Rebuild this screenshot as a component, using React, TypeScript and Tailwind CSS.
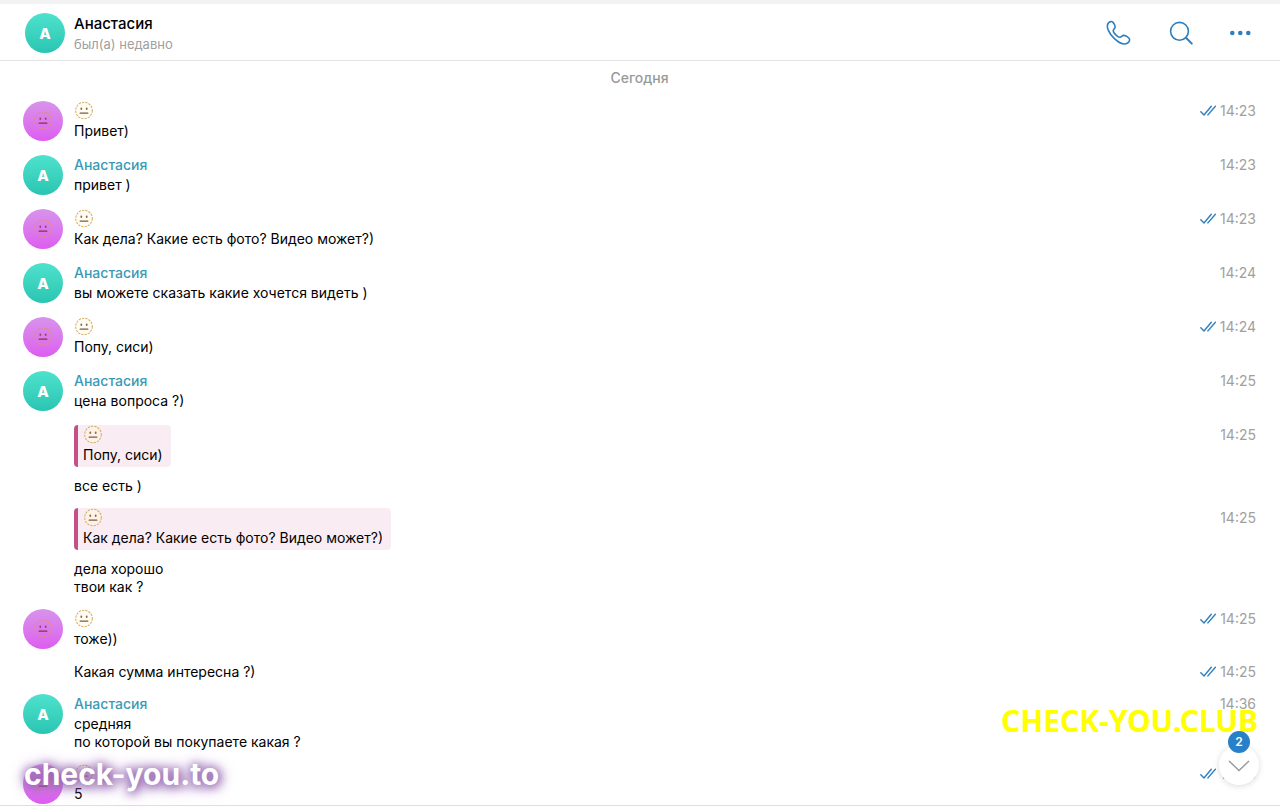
import { Fragment } from "react";

type Message = {
  id: number;
  from?: "me" | "her";
  quote?: string;
  lines: string[];
  time: string;
  read?: boolean;
};

const messages: Message[] = [
  { id: 1, from: "me", lines: ["Привет)"], time: "14:23", read: true },
  { id: 2, from: "her", lines: ["привет )"], time: "14:23" },
  { id: 3, from: "me", lines: ["Как дела? Какие есть фото? Видео может?)"], time: "14:23", read: true },
  { id: 4, from: "her", lines: ["вы можете сказать какие хочется видеть )"], time: "14:24" },
  { id: 5, from: "me", lines: ["Попу, сиси)"], time: "14:24", read: true },
  { id: 6, from: "her", lines: ["цена вопроса ?)"], time: "14:25" },
  { id: 7, quote: "Попу, сиси)", lines: ["все есть )"], time: "14:25" },
  { id: 8, quote: "Как дела? Какие есть фото? Видео может?)", lines: ["дела хорошо", "твои как ?"], time: "14:25" },
  { id: 9, from: "me", lines: ["тоже))"], time: "14:25", read: true },
  { id: 10, lines: ["Какая сумма интересна ?)"], time: "14:25", read: true },
  { id: 11, from: "her", lines: ["средняя", "по которой вы покупаете какая ?"], time: "14:36" },
  { id: 12, from: "me", lines: ["5"], time: "14:36", read: true },
];

function DottedFace({ tone }: { tone: "light" | "avatar" | "quote" }) {
  const light = tone !== "avatar";
  return (
    <svg className="size-5 shrink-0" viewBox="0 0 20 20" fill="none" aria-hidden="true">
      <circle
        cx="10"
        cy="9.5"
        r="8.3"
        fill={tone === "light" ? "#fffdf3" : tone === "quote" ? "#fdf1e8" : "none"}
        stroke={light ? "#d6b06a" : "#e08c80"}
        strokeWidth="1.1"
        strokeDasharray="2.3 1.05"
      />
      <ellipse cx="7.3" cy="7.8" rx="0.9" ry="1.3" fill={light ? "#8a6a4d" : "#9c4560"} />
      <ellipse cx="12.7" cy="7.8" rx="0.9" ry="1.3" fill={light ? "#8a6a4d" : "#9c4560"} />
      <path d="M6.2 12.2h7.6" stroke={light ? "#7b5b40" : "#8f2f48"} strokeWidth="1.3" strokeLinecap="round" />
    </svg>
  );
}

function Avatar({ who }: { who: "me" | "her" }) {
  return who === "her" ? (
    <div className="flex size-10 shrink-0 items-center justify-center rounded-full bg-linear-to-b from-[#4de2cd] to-[#29c5b2] pt-0.5 text-[15px] font-extrabold text-white">
      А
    </div>
  ) : (
    <div className="flex size-10 shrink-0 items-center justify-center rounded-full bg-linear-to-b from-[#d793ea] to-[#dd5cf0]">
      <DottedFace tone="avatar" />
    </div>
  );
}

function Checks() {
  return (
    <svg className="h-3 w-4" viewBox="0 0 16 12" fill="none" stroke="#2f7fbf" strokeWidth="1.4" strokeLinecap="round" strokeLinejoin="round" aria-label="Прочитано">
      <path d="M0.8 6.8 4 10 11.3 1.2" />
      <path d="M7.9 9.9 15.4 1.2" />
    </svg>
  );
}

function MessageRow({ message }: { message: Message }) {
  const { from, quote, lines, time, read } = message;
  return (
    <li className="flex shrink-0 pb-[13px]">
      <div className={from ? "h-[41px] w-[51px] shrink-0" : "w-[51px] shrink-0"}>{from && <Avatar who={from} />}</div>
      <div className="min-w-0 flex-1">
        {from === "me" && (
          <div className="h-[21px]">
            <DottedFace tone="light" />
          </div>
        )}
        {from === "her" && <div className="h-[21px] leading-5 font-medium text-[#3a9ab5]">Анастасия</div>}
        {quote && (
          <blockquote className="mb-2.5 h-[42px] w-fit max-w-full rounded-sm border-l-4 border-[#c4508a] bg-[#faecf3] pr-2 pl-[5px]">
            <DottedFace tone="quote" />
            <p className="leading-5">{quote}</p>
          </blockquote>
        )}
        <p>
          {lines.map((line, i) => (
            <Fragment key={line}>
              {i > 0 && <br />}
              {line}
            </Fragment>
          ))}
        </p>
      </div>
      <div className={from || quote ? "flex h-5 items-center gap-1 text-[#a0a0a0]" : "flex h-[18px] items-center gap-1 text-[#a0a0a0]"}>
        {read && <Checks />}
        <time>{time}</time>
      </div>
    </li>
  );
}

export default function App() {
  return (
    <div className="relative flex h-screen flex-col overflow-hidden bg-white font-['Inter','Liberation_Sans',sans-serif] text-sm leading-[18px] text-black">
      <header className="flex shrink-0 items-center border-t-4 border-b border-t-[#f2f2f2] border-b-[#e4e4e4] pt-2 pr-7 pb-1.5 pl-[25px]">
        <Avatar who="her" />
        <div className="ml-[9px] flex-1 pt-0.5">
          <h1 className="text-[15px] leading-5 font-medium">Анастасия</h1>
          <p className="text-[13px] leading-5 text-[#a0a0a0]">был(а) недавно</p>
        </div>
        <div className="flex items-center text-[#2f7fbf]">
          <button type="button" aria-label="Позвонить">
            <svg className="size-7" viewBox="0 0 28 28" fill="none" stroke="currentColor" strokeWidth="1.6" strokeLinejoin="round">
              <path d="M4.2 4.2C5.4 2.5 7.6 1.9 9 3.4C10.5 5 11.2 6.6 11.1 8.1C11 9.6 9.2 10.3 9.2 11.9C9.3 13.9 13.8 18.2 15.8 18.3C17.4 18.4 18.1 16.5 19.7 16.4C21.3 16.3 23.4 17.6 24.8 19C26.2 20.4 25.5 22.8 23.7 24C20.5 26.1 15.2 24.1 10.2 19.3C4.6 14 1.9 7.8 4.2 4.2Z" />
            </svg>
          </button>
          <button type="button" aria-label="Поиск" className="mr-8 ml-9">
            <svg className="size-7" viewBox="0 0 28 28" fill="none" stroke="currentColor" strokeWidth="1.6" strokeLinecap="round">
              <circle cx="11.5" cy="12.3" r="8.9" />
              <path d="m18 18.8 5.8 5.8" strokeWidth="2" />
            </svg>
          </button>
          <button type="button" aria-label="Ещё">
            <svg className="h-7 w-6" viewBox="0 0 24 28" fill="currentColor">
              <circle cx="4.3" cy="14" r="2.3" />
              <circle cx="12.3" cy="14" r="2.3" />
              <circle cx="20.3" cy="14" r="2.3" />
            </svg>
          </button>
        </div>
      </header>

      <main className="relative min-h-0 flex-1 overflow-hidden pr-6 pl-[23px]">
        <h2 className="h-10 pt-2 text-center font-medium text-[#999999]">Сегодня</h2>
        <ol className="flex flex-col">
          {messages.map((message) => (
            <MessageRow key={message.id} message={message} />
          ))}
        </ol>
      </main>
      <footer className="h-[7px] shrink-0 border-t border-[#dedede]" />

      <button
        type="button"
        aria-label="Вниз, новых сообщений: 2"
        className="absolute right-[21px] bottom-[27px] flex size-10 items-center justify-center rounded-full bg-white shadow-[0_1px_6px_rgba(0,0,0,0.15)]"
      >
        <svg className="mt-0.5 h-3 w-6" viewBox="0 0 24 12" fill="none" stroke="#999999" strokeWidth="1.4">
          <path d="m2 1 10 9.5L22 1" />
        </svg>
      </button>
      <p className="absolute right-[22px] bottom-[71px] font-['Noto_Sans','Open_Sans',sans-serif] text-[30px] leading-10 font-bold text-[#ffff00]">
        CHECK-YOU.CLUB
      </p>
      <span className="absolute right-[30px] bottom-[59px] flex size-[22px] items-center justify-center rounded-full bg-[#2881c8] text-xs font-semibold text-white">
        2
      </span>
      <p className="absolute bottom-[18px] left-6 text-[30px] leading-10 font-bold text-white [text-shadow:1px_1px_8px_#9468b0,1px_1px_12px_#9468b0,1px_1px_16px_#9a6cb4]">
        check-you.to
      </p>
    </div>
  );
}
